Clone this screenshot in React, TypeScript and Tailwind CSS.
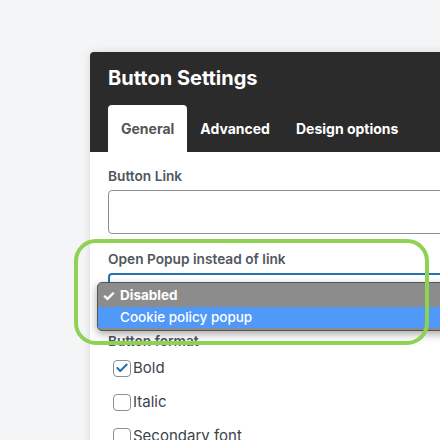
import { Check } from "lucide-react";

function CheckRow({ label, checked }: { label: string; checked?: boolean }) {
  return (
    <label className="flex items-center h-[34px] pl-[5px] text-[15px] text-[#3c434a]">
      <span className="w-[18px] h-[17px] rounded-[4px] border border-[#8c8f94] bg-white flex items-center justify-center">
        {checked && <Check className="w-[14px] h-[14px] text-[#2271b1]" strokeWidth={3.5} />}
      </span>
      <span className="ml-[2px]">{label}</span>
    </label>
  );
}

export default function App() {
  return (
    <div
      className="relative w-[440px] h-[440px] overflow-hidden bg-[#f4f5f7] pt-[52px] pl-[90px]"
      style={{ fontFamily: "Inter, 'Noto Sans', sans-serif" }}
    >
      <div className="w-[420px] h-[420px] rounded-tl-[4px] overflow-hidden bg-white shadow-[0_0_8px_rgba(0,0,0,0.12)]">
        <div className="bg-[#2b2b2b] h-[100px] flex flex-col justify-between">
          <h2 className="pl-[18px] pt-[14px] text-[20px] leading-[24px] font-bold text-white">Button Settings</h2>
          <div className="flex pl-[18px] h-[47px] text-[14px] font-bold">
            <div className="bg-white rounded-t-[4px] px-[13px] flex items-center text-[#555]">General</div>
            <div className="px-[13px] flex items-center text-white">Advanced</div>
            <div className="px-[13px] flex items-center text-white">Design options</div>
          </div>
        </div>
        <div className="px-[18px] pt-[15px]">
          <div className="text-[13.7px] leading-[18px] font-semibold text-[#50575e]">Button Link</div>
          <div className="mt-[5px] h-[44px] rounded-[4px] border border-[#8c8f94]" />
          <div className="mt-[16px] text-[13.7px] leading-[18px] font-semibold text-[#50575e]">Open Popup instead of link</div>
          <div className="mt-[5px] h-[44px] rounded-[4px] border-2 border-[#2271b1]" />
          <div className="mt-[16px] text-[13.7px] leading-[16px] font-semibold text-[#50575e]">Button format</div>
          <div className="pt-[2px]">
            <CheckRow label="Bold" checked />
            <CheckRow label="Italic" />
            <CheckRow label="Secondary font" />
          </div>
        </div>
      </div>

      <div className="absolute left-[97px] top-[282px] w-[360px] rounded-[5px] border border-[#555] bg-[#8c8c8c] py-[1px] text-[13.5px] text-white shadow-[0_3px_8px_rgba(0,0,0,0.35)]">
        <div className="h-[23px] flex items-center font-bold">
          <span className="w-[22px] pl-[4px] text-[15px] leading-none">✓</span>
          <span>Disabled</span>
        </div>
        <div className="h-[21px] flex items-center bg-[#5199f9] font-medium">
          <span className="w-[22px]" />
          <span>Cookie policy popup</span>
        </div>
        <div className="h-[1px]" />
      </div>

      <div className="absolute left-[74px] top-[239px] w-[355px] h-[106px] rounded-[22px] border-4 border-[#8fd154]" />
    </div>
  );
}
